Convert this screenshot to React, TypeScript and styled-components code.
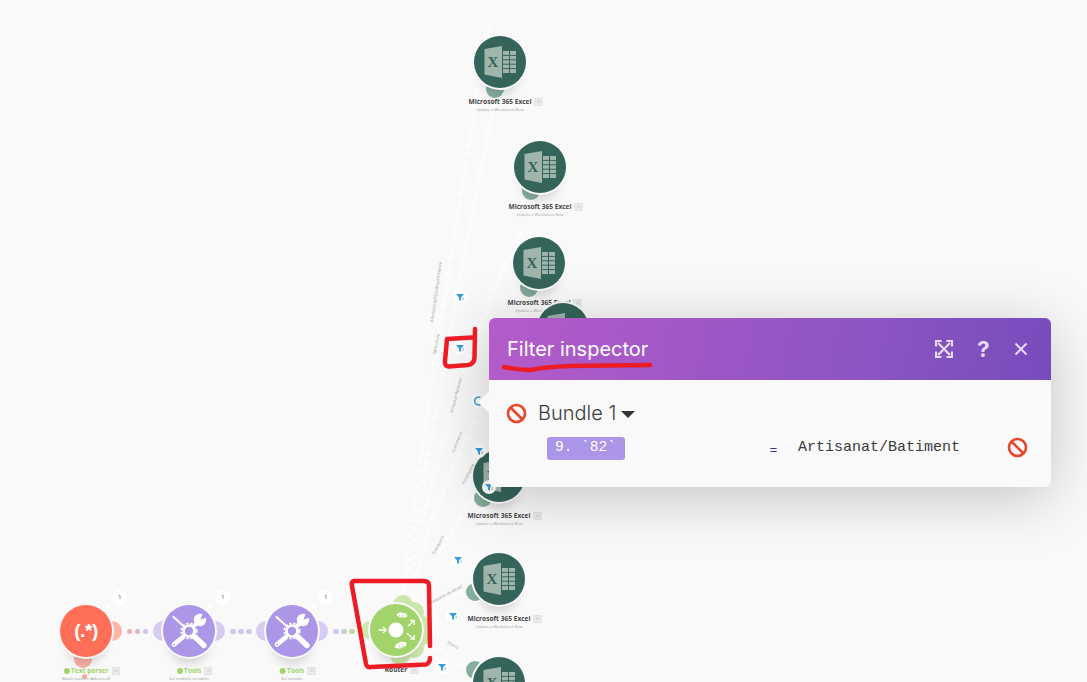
import React from "react";
import styled, { createGlobalStyle } from "styled-components";

const Global = createGlobalStyle`
  html, body { margin: 0; padding: 0; background: #f9f9f9; }
  body { font-family: "Inter", "Liberation Sans", sans-serif; }
`;

const Canvas = styled.div`
  position: relative;
  width: 1087px;
  height: 682px;
  overflow: hidden;
  background: #f9f9f9;
`;

const Layer = styled.svg`
  position: absolute;
  left: 0;
  top: 0;
  pointer-events: none;
`;

const Node = styled.div<{ $x: number; $y: number }>`
  position: absolute;
  left: ${(p) => p.$x - 26}px;
  top: ${(p) => p.$y - 26}px;
  width: 52px;
  height: 52px;
`;

const Disc = styled.div<{ $bg: string }>`
  position: relative;
  width: 52px;
  height: 52px;
  border-radius: 50%;
  background: ${(p) => p.$bg};
  box-shadow: 0 0 0 2px #f9f9f9, 0 13px 10px -6px rgba(0, 0, 0, 0.14);
  display: flex;
  align-items: center;
  justify-content: center;
`;

const Lobe = styled.div<{ $dx: number; $dy: number; $bg: string; $r?: number }>`
  position: absolute;
  left: ${(p) => 26 + p.$dx - (p.$r ?? 9)}px;
  top: ${(p) => 26 + p.$dy - (p.$r ?? 9)}px;
  width: ${(p) => (p.$r ?? 9) * 2}px;
  height: ${(p) => (p.$r ?? 9) * 2}px;
  border-radius: 50%;
  background: ${(p) => p.$bg};
`;

const LabelBox = styled.div`
  position: absolute;
  left: 50%;
  top: 62px;
  transform: translateX(-50%);
  display: flex;
  flex-direction: column;
  align-items: center;
  white-space: nowrap;
  font-family: "Open Sans", "Liberation Sans", sans-serif;
`;

const TitleRow = styled.div`
  position: relative;
  display: flex;
  align-items: center;
  gap: 1.5px;
  height: 8px;
`;

const Title = styled.span<{ $ok?: boolean }>`
  font-size: 6.6px;
  line-height: 8px;
  font-weight: 700;
  color: ${(p) => (p.$ok ? "#a3d46c" : "#484848")};
`;

const Sub = styled.span`
  font-size: 4px;
  line-height: 6px;
  margin-top: 1px;
  color: #a0a0a0;
`;

const NoteBadge = styled.span`
  position: absolute;
  left: calc(100% + 3px);
  top: 0;
  width: 8px;
  height: 8px;
  background: #ececec;
  border: 1px solid #e2e2e2;
  box-sizing: border-box;
  font-size: 4px;
  line-height: 6px;
  text-align: center;
  color: #bbb;
`;

const CheckDot = styled.span`
  width: 6px;
  height: 6px;
  border-radius: 50%;
  background: #a3d46c;
  display: inline-flex;
`;

const Bubble = styled.div`
  position: absolute;
  left: 52px;
  top: -15px;
  width: 15px;
  height: 15px;
  border-radius: 50%;
  background: #fff;
  font-size: 5px;
  font-weight: 700;
  line-height: 15px;
  text-align: center;
  color: #888;
  &::before {
    content: "";
    position: absolute;
    left: -7px;
    top: 13px;
    width: 5px;
    height: 5px;
    border-radius: 50%;
    background: #fff;
  }
  &::after {
    content: "";
    position: absolute;
    left: -11px;
    top: 17px;
    width: 3px;
    height: 3px;
    border-radius: 50%;
    background: #fff;
  }
`;

const ParserGlyph = styled.span`
  color: #fff;
  font-family: "Liberation Sans", sans-serif;
  font-weight: 700;
  font-size: 19px;
  letter-spacing: -0.400px;
`;

const LinkDots = styled.div<{ $x: number; $y: number }>`
  position: absolute;
  left: ${(p) => p.$x}px;
  top: ${(p) => p.$y}px;
  display: flex;
  gap: 2.5px;
`;

const LinkDot = styled.span<{ $bg: string }>`
  width: 5.5px;
  height: 5.5px;
  border-radius: 50%;
  background: ${(p) => p.$bg};
`;

const FilterPin = styled.div<{ $x: number; $y: number }>`
  position: absolute;
  left: ${(p) => p.$x - 7}px;
  top: ${(p) => p.$y - 7}px;
  width: 14px;
  height: 14px;
  border-radius: 50%;
  background: #fff;
  display: flex;
  align-items: center;
  justify-content: center;
`;

const PinCount = styled.span`
  position: absolute;
  left: 9px;
  top: 7px;
  font-size: 3.5px;
  line-height: 4px;
  color: #888;
`;

const RouteLabel = styled.span<{ $x: number; $y: number; $a: number }>`
  position: absolute;
  left: ${(p) => p.$x}px;
  top: ${(p) => p.$y}px;
  transform: translate(-50%, -50%) rotate(${(p) => p.$a}deg);
  font-family: "Open Sans", "Liberation Sans", sans-serif;
  font-size: 4.2px;
  line-height: 5px;
  white-space: nowrap;
  color: #9a9a9a;
`;

const Inspector = styled.section`
  position: absolute;
  left: 489px;
  top: 318px;
  width: 562px;
  height: 169px;
  border-radius: 6px;
  background: #f9f9f9;
  box-shadow: 0 10px 60px rgba(0, 0, 0, 0.22);
  display: flex;
  flex-direction: column;
  &::before {
    content: "";
    position: absolute;
    left: -7px;
    top: 75px;
    width: 18px;
    height: 18px;
    transform: rotate(45deg);
    background: #f9f9f9;
  }
`;

const InspectorHeader = styled.header`
  position: relative;
  height: 62px;
  flex: none;
  box-sizing: border-box;
  padding: 0 20px 0 18px;
  border-radius: 6px 6px 0 0;
  background: linear-gradient(100deg, #b55bca 0%, #a058c6 35%, #8a54c2 70%, #754dbb 100%);
  display: flex;
  align-items: center;
  justify-content: space-between;
`;

const InspectorTitle = styled.h2`
  margin: 0;
  font-size: 20px;
  font-weight: 400;
  color: #fff;
`;

const HeaderIcons = styled.div`
  display: flex;
  align-items: center;
  gap: 19px;
`;

const IconSlot = styled.span<{ $pull?: number }>`
  width: 21px;
  height: 21px;
  margin-left: ${(p) => p.$pull ?? 0}px;
  display: flex;
  align-items: center;
  justify-content: center;
  color: #ead9f5;
`;

const InspectorBody = styled.div`
  position: relative;
  flex: 1;
  padding: 21px 23px 0 17px;
  display: flex;
  flex-direction: column;
`;

const BundleRow = styled.div`
  display: flex;
  align-items: center;
  gap: 11px;
  height: 24px;
  font-size: 20px;
  font-weight: 300;
  color: #3c3c3c;
`;

const Caret = styled.span`
  width: 0;
  height: 0;
  margin-left: -6px;
  margin-top: 3px;
  border-left: 7px solid transparent;
  border-right: 7px solid transparent;
  border-top: 7px solid #333;
`;

const ConditionRow = styled.div`
  display: grid;
  grid-template-columns: 226px 25px 1fr 21px;
  align-items: center;
  margin-top: 12px;
  padding-left: 41px;
  font-family: "Liberation Mono", "Courier New", monospace;
  font-size: 15px;
`;

const Pill = styled.span`
  width: 78px;
  height: 23px;
  box-sizing: border-box;
  padding-left: 8px;
  border-radius: 3px;
  background: #ab95e8;
  color: #fff;
  font-size: 14.500px;
  line-height: 20px;
`;

const Operator = styled.span`
  color: #4a2fa8;
  font-size: 13px;
  text-align: center;
  margin-left: -24px;
  padding-top: 3px;
`;

const Value = styled.span`
  color: #3a3a3a;
  margin-left: 0;
  padding-bottom: 2px;
`;

const BanSlot = styled.span`
  display: flex;
  margin-top: -2px;
`;

const HelpGlyph = styled.span`
  font-size: 22px;
  font-weight: 700;
  line-height: 21px;
`;

const GREEN = "#35645a";
const GREEN_L = "#86ae9d";

const ExcelIcon = () => (
  <svg width="52" height="52" viewBox="0 0 52 52">
    <polygon points="10.500,13 28,10 28,42 10.500,38.500" fill="#a0b6ad" />
    <rect x="29" y="15" width="13" height="22" fill="#a0b6ad" />
    <path d="M35.500 15v22M29 19.400h13M29 23.800h13M29 28.200h13M29 32.600h13" stroke={GREEN} strokeWidth="1" />
    <text x="19" y="31" textAnchor="middle" fontFamily="Liberation Serif, serif" fontWeight="700" fontSize="15" fill={GREEN}>
      X
    </text>
  </svg>
);

const ToolsIcon = ({ bg }: { bg: string }) => (
  <svg width="52" height="52" viewBox="0 0 52 52">
    <path d="M10.500 12l10 9" stroke="#fff" strokeWidth="2" strokeLinecap="round" />
    <path d="M29 29l3 3" stroke="#fff" strokeWidth="2.400" />
    <path d="M31.500 31.500l9.500 9" stroke="#fff" strokeWidth="5.400" strokeLinecap="round" />
    <path d="M20 32l-9 7.500" stroke="#fff" strokeWidth="4.800" strokeLinecap="round" />
    <circle cx="11" cy="39.500" r="0.900" fill={bg} />
    <path d="M30 22l6-6" stroke="#fff" strokeWidth="4" />
    <circle cx="37" cy="15" r="6.200" fill="#fff" />
    <path d="M37.500 14.500l3-8 6 5.500z" fill={bg} />
    <circle cx="26" cy="26" r="5.500" fill="none" stroke="#fff" strokeWidth="2.600" />
    <circle cx="26" cy="26" r="7.600" fill="none" stroke="#fff" strokeWidth="2" strokeDasharray="2.200 1.900" />
  </svg>
);

const RouterIcon = () => (
  <svg width="52" height="52" viewBox="0 0 52 52" fill="none" stroke="#fff" strokeWidth="1.300">
    <circle cx="26" cy="26" r="7.500" fill="#fff" stroke="none" />
    <path d="M8.500 26h7.500M13 23l3 3-3 3" />
    <path d="M38 22l6-5M40 16.500h4.200v4.200" />
    <path d="M37 29.500l7 5.500M44.300 31v4.200h-4.200" />
    <path d="M26.500 10.500l4-2 6 1.500.5 2.500-3 1-5-.5z" fill="#fff" strokeWidth="0.500" />
    <path d="M25 43.500l1-3 5-2.500 5 .5v3l-6 3z" fill="#fff" strokeWidth="0.500" />
    <path d="M29 10.500l1.500 3M32 10.500l1 3" stroke="#a3d46c" strokeWidth="0.600" />
    <path d="M29 40l1 4M32 39.500l1 4" stroke="#a3d46c" strokeWidth="0.600" />
  </svg>
);

const FunnelIcon = () => (
  <svg width="8" height="7" viewBox="0 0 8 7">
    <path d="M0 0h8L5 3.500V7L3 5.800V3.500z" fill="#36a0dd" />
  </svg>
);

const BanIcon = () => (
  <svg width="21" height="21" viewBox="0 0 21 21">
    <circle cx="10.500" cy="10.500" r="8.500" fill="none" stroke="#e8452a" strokeWidth="2.600" />
    <path d="M4.500 4.500l12 12" stroke="#e8452a" strokeWidth="2.600" />
  </svg>
);

const ExpandIcon = () => (
  <svg width="18" height="18" viewBox="0 0 18 18" fill="none" stroke="currentColor" strokeWidth="2.200">
    <path d="M3 3l12 12M15 3L3 15" />
    <path d="M1 6.500V1h5.500M11.500 1H17v5.500M17 11.500V17h-5.500M6.500 17H1v-5.500" />
  </svg>
);

const CloseIcon = () => (
  <svg width="14" height="14" viewBox="0 0 14 14" stroke="currentColor" strokeWidth="2">
    <path d="M1.500 1.500l11 11M12.500 1.500l-11 11" />
  </svg>
);

function routeDots(x0: number, y0: number, cx: number, cy: number, x1: number, y1: number, step = 8.200) {
  const dots: [number, number][] = [];
  const n = Math.round(Math.hypot(x1 - x0, y1 - y0) / step);
  for (let i = 0; i <= n; i++) {
    const t = i / n;
    const u = 1 - t;
    dots.push([u * u * x0 + 2 * u * t * cx + t * t * x1, u * u * y0 + 2 * u * t * cy + t * t * y1]);
  }
  return dots;
}

const routes: [number, number, number, number, number, number][] = [
  [400, 610, 440, 311, 488, 28],
  [402, 610, 456, 285, 495, 100],
  [408, 600, 442, 394, 520, 235],
  [414, 600, 425, 489, 540, 310],
  [418, 600, 442, 540, 478, 490],
  [412, 618, 440, 600, 468, 590],
  [425, 645, 445, 650, 468, 672],
];

const excelNodes = [
  { x: 500, y: 62, lx: -5.500, ly: 27 },
  { x: 540, y: 167, lx: -9, ly: 24 },
  { x: 539, y: 263, lx: -10, ly: 25 },
  { x: 563, y: 329, lx: -10, ly: 25 },
  { x: 499, y: 476, lx: -16, ly: 22 },
  { x: 499, y: 579, lx: -24, ly: 13 },
  { x: 499, y: 683, lx: -24, ly: -13 },
];

const pins: [number, number][] = [
  [460, 297], [460, 348], [479, 451], [489, 487], [458, 560], [453, 616], [442, 667],
];

const labels: [string, number, number, number][] = [
  ["Administratif/Juridique/Finance", 436, 292, -82],
  ["Agriculture", 436, 344, -78],
  ["Artisanat/Batiment", 456, 395, -75],
  ["Commerce", 457, 442, -68],
  ["Automobile", 468, 474, -62],
  ["Transports", 438, 545, -62],
  ["Immeuble de détail", 445, 595, -28],
  ["Divers", 453, 645, 28],
];

export default function App() {
  return (
    <Canvas>
      <Global />
      <Layer width="1087" height="682">
        {routes.flatMap((r, i) =>
          routeDots(r[0], r[1], r[2], r[3], r[4], r[5]).map(([x, y], k) => (
            <circle key={`${i}-${k}`} cx={x} cy={y} r="2.800" fill="#fff" fillOpacity="0.5" />
          ))
        )}
      </Layer>

      {excelNodes.map((n) => (
        <Node key={n.y} $x={n.x} $y={n.y}>
          <Lobe $dx={n.lx} $dy={n.ly} $bg={GREEN_L} />
          <Disc $bg={GREEN}>
            <ExcelIcon />
          </Disc>
          {n.y < 640 && (
            <LabelBox>
              <TitleRow>
                <Title>Microsoft 365 Excel</Title>
                <NoteBadge>⊡</NoteBadge>
              </TitleRow>
              <Sub>Update a Worksheet Row</Sub>
            </LabelBox>
          )}
        </Node>
      ))}

      {pins.map(([x, y]) => (
        <FilterPin key={y} $x={x} $y={y}>
          <FunnelIcon />
          <PinCount>0</PinCount>
        </FilterPin>
      ))}
      <FilterPin $x={478} $y={401}>
        <svg width="10" height="10" viewBox="0 0 10 10">
          <path d="M7.500 1.500A4 4 0 1 0 7.500 8.500" fill="none" stroke="#36a0dd" strokeWidth="1.500" />
        </svg>
      </FilterPin>

      {labels.map(([t, x, y, a]) => (
        <RouteLabel key={t} $x={x} $y={y} $a={a}>
          {t}
        </RouteLabel>
      ))}

      <Node $x={86} $y={631}>
        <Lobe $dx={26} $dy={0} $bg="#ffb5a8" $r={10} />
        <Lobe $dx={-3} $dy={28} $bg="#f9b3a6" />
        <Lobe $dx={-2} $dy={45} $bg="#f5a698" $r={2.500} />
        <Disc $bg="#ff6f57">
          <ParserGlyph>(.*)</ParserGlyph>
        </Disc>
        <Bubble>1</Bubble>
        <LabelBox>
          <TitleRow>
            <CheckDot />
            <Title $ok>Text parser</Title>
            <NoteBadge>⊡</NoteBadge>
          </TitleRow>
          <Sub>Match pattern (Advanced)</Sub>
        </LabelBox>
      </Node>
      <LinkDots $x={126.500} $y={628.500}>
        <LinkDot $bg="#eab0b8" />
        <LinkDot $bg="#deb4cc" />
        <LinkDot $bg="#d2c0ec" />
      </LinkDots>

      <Node $x={189} $y={631}>
        <Lobe $dx={-26} $dy={0} $bg="#d6cbf2" $r={10} />
        <Lobe $dx={26} $dy={0} $bg="#d6cbf2" $r={10} />
        <Disc $bg="#ab96e8">
          <ToolsIcon bg="#ab96e8" />
        </Disc>
        <Bubble>1</Bubble>
        <LabelBox>
          <TitleRow>
            <CheckDot />
            <Title $ok>Tools</Title>
            <NoteBadge>⊡</NoteBadge>
          </TitleRow>
          <Sub>Set multiple variables</Sub>
        </LabelBox>
      </Node>
      <LinkDots $x={230} $y={628.500}>
        <LinkDot $bg="#d2c6f0" />
        <LinkDot $bg="#d2c6f0" />
        <LinkDot $bg="#d2c6f0" />
      </LinkDots>

      <Node $x={292} $y={631}>
        <Lobe $dx={-26} $dy={0} $bg="#d6cbf2" $r={10} />
        <Lobe $dx={26} $dy={0} $bg="#d6cbf2" $r={10} />
        <Disc $bg="#ab96e8">
          <ToolsIcon bg="#ab96e8" />
        </Disc>
        <Bubble>1</Bubble>
        <LabelBox>
          <TitleRow>
            <CheckDot />
            <Title $ok>Tools</Title>
            <NoteBadge>⊡</NoteBadge>
          </TitleRow>
          <Sub>Set variable</Sub>
        </LabelBox>
      </Node>
      <LinkDots $x={333} $y={628.500}>
        <LinkDot $bg="#d2c6f0" />
        <LinkDot $bg="#c8d4d0" />
        <LinkDot $bg="#bcdca0" />
      </LinkDots>

      <Node $x={396} $y={630}>
        <Lobe $dx={-26} $dy={0} $bg="#cfe8b0" />
        <Lobe $dx={7} $dy={-25} $bg="#cbe6aa" $r={10} />
        <Lobe $dx={18} $dy={-18} $bg="#cbe6aa" $r={10} />
        <Lobe $dx={25} $dy={-6} $bg="#cbe6aa" $r={9} />
        <Lobe $dx={25} $dy={7} $bg="#cbe6aa" $r={9} />
        <Lobe $dx={18} $dy={18} $bg="#cbe6aa" $r={10} />
        <Lobe $dx={4} $dy={25} $bg="#cbe6aa" $r={10} />
        <Disc $bg="#a3d46c">
          <RouterIcon />
        </Disc>
        <LabelBox>
          <TitleRow>
            <Title>Router</Title>
            <NoteBadge>⊡</NoteBadge>
          </TitleRow>
        </LabelBox>
      </Node>

      <Inspector>
        <InspectorHeader>
          <InspectorTitle>Filter inspector</InspectorTitle>
          <HeaderIcons>
            <IconSlot>
              <ExpandIcon />
            </IconSlot>
            <IconSlot>
              <HelpGlyph>?</HelpGlyph>
            </IconSlot>
            <IconSlot $pull={-3}>
              <CloseIcon />
            </IconSlot>
          </HeaderIcons>
        </InspectorHeader>
        <InspectorBody>
          <BundleRow>
            <BanIcon />
            <span>Bundle 1</span>
            <Caret />
          </BundleRow>
          <ConditionRow>
            <Pill>9. `82`</Pill>
            <Operator>=</Operator>
            <Value>Artisanat/Batiment</Value>
            <BanSlot>
              <BanIcon />
            </BanSlot>
          </ConditionRow>
        </InspectorBody>
      </Inspector>

      <Layer width="1087" height="682">
        <g fill="none" stroke="#ed1c24" strokeWidth="4.500" strokeLinecap="round" strokeLinejoin="round">
          <path d="M475 329 L474.500 358 Q474 364 468 365 L449 366.500 Q444.500 366.500 445 361 L447 339 L472 337.500" />
          <path d="M430 646 L429 586 Q429 581 424 581 L354 581 Q351 582 352 586 L366 664 Q367 668 371 667 L426 664.500 Q430 663 430 658" />
          <path d="M504 367 Q518 370 530 370 Q545 367 570 366 L650 365" />
        </g>
      </Layer>
    </Canvas>
  );
}
